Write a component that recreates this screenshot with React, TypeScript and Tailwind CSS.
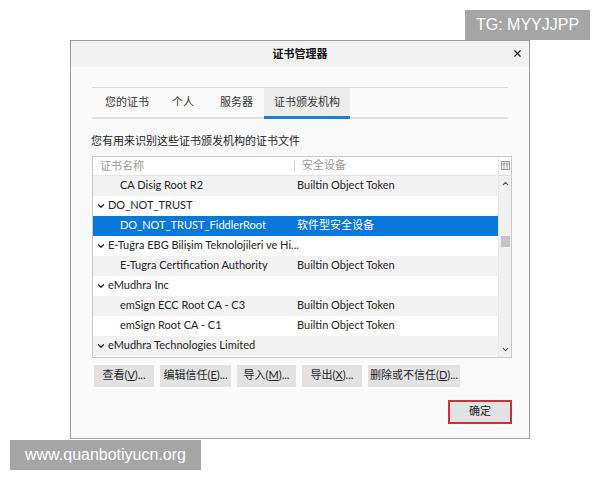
import { ChevronDown, ChevronUp, X } from "lucide-react"

const font = { fontFamily: 'Lato, "Noto Sans CJK SC", sans-serif' }

type Row = { name: string; device?: string; group?: boolean; selected?: boolean }

const rows: Row[] = [
  { name: "CA Disig Root R2", device: "Builtin Object Token" },
  { name: "DO_NOT_TRUST", group: true },
  { name: "DO_NOT_TRUST_FiddlerRoot", device: "软件型安全设备", selected: true },
  { name: "E-Tuğra EBG Bilişim Teknolojileri ve Hi...", group: true },
  { name: "E-Tugra Certification Authority", device: "Builtin Object Token" },
  { name: "eMudhra Inc", group: true },
  { name: "emSign ECC Root CA - C3", device: "Builtin Object Token" },
  { name: "emSign Root CA - C1", device: "Builtin Object Token" },
  { name: "eMudhra Technologies Limited", group: true },
]

const buttons: [string, string, string, string][] = [
  ["查看(", "V", ")...", "w-[60px]"],
  ["编辑信任(", "E", ")...", "w-[71px]"],
  ["导入(", "M", ")...", "w-[59px]"],
  ["导出(", "X", ")...", "w-[60px]"],
  ["删除或不信任(", "D", ")...", "w-[92px]"],
]

export default function App() {
  return (
    <div className="relative w-[600px] h-[480px] bg-white overflow-hidden text-[#222]" style={font}>
      <div className="pt-[40px] pl-[70px]">
        <div className="w-[460px] h-[399px] border border-[#9a9a9a] bg-[#f9f9f9] flex flex-col">
          <div className="h-[26px] bg-[#f1f1f1] flex items-center justify-center relative">
            <span className="text-[11px] font-bold text-[#111]">证书管理器</span>
            <X className="absolute right-[6px] top-[7px] w-[11px] h-[11px] text-[#111]" strokeWidth={2.5} />
          </div>

          <div className="px-[21px] pt-[20px]">
            <div className="border-t border-[#d9d9d9] border-b-2 border-b-[#e0e0e0] flex h-[32px] text-[11px] text-[#333]">
              <div className="pl-[13px] w-[80px] flex items-center">您的证书</div>
              <div className="w-[48px] flex items-center">个人</div>
              <div className="w-[44px] flex items-center">服务器</div>
              <div className="w-[86px] flex items-center justify-center bg-[#ececec] border-b-[3px] border-[#1c7fd8] -mb-[2px]">证书颁发机构</div>
            </div>

            <div className="mt-[14px] text-[11px] text-[#222] -ml-[1px]">您有用来识别这些证书颁发机构的证书文件</div>

            <div className="mt-[6px] w-[420px] h-[202px] border border-[#c8c8c8] bg-white flex">
              <div className="flex-1 flex flex-col">
                <div className="h-[19px] flex items-center text-[11px] text-[#999] border-b border-[#e4e4e4]">
                  <div className="w-[202px] pl-[7px] border-r border-[#cfcfcf] h-[12px] leading-[12px]">证书名称</div>
                  <div className="pl-[7px]">安全设备</div>
                </div>
                {rows.map((r, i) => (
                  <div
                    key={i}
                    className={
                      "h-[20px] flex items-center text-[11px] " +
                      (r.selected ? "bg-[#0a78d8] text-white" : i % 2 === 0 ? "bg-[#f2f2f2]" : "bg-white")
                    }
                  >
                    <div className="w-[203px] shrink-0 flex items-center whitespace-nowrap">
                      {r.group ? (
                        <>
                          <ChevronDown className="ml-[3px] shrink-0 w-[10px] h-[10px]" strokeWidth={3} />
                          <span className="ml-[2px]">{r.name}</span>
                        </>
                      ) : (
                        <span className="pl-[27px]">{r.name}</span>
                      )}
                    </div>
                    <div className="pl-[1px]">{r.device}</div>
                  </div>
                ))}
              </div>
              <div className="w-[13px] bg-[#f0f0f0] border-l border-[#e6e6e6] flex flex-col items-center">
                <div className="h-[19px] w-full flex items-center justify-center border-b border-[#dcdcdc] bg-white">
                  <svg width="9" height="9" viewBox="0 0 9 9" fill="none" stroke="#999" strokeWidth="1">
                    <rect x="0.5" y="0.5" width="8" height="8" />
                    <path d="M3 0.5v8M6 0.5v8M0.5 3h8" />
                  </svg>
                </div>
                <ChevronUp className="mt-[3px] w-[9px] h-[9px] text-[#555]" strokeWidth={3} />
                <div className="mt-[48px] w-[9px] h-[11px] bg-[#c4c4c4]" />
                <div className="flex-1" />
                <ChevronDown className="mb-[3px] w-[9px] h-[9px] text-[#555]" strokeWidth={3} />
              </div>
            </div>

            <div className="mt-[7px] flex gap-[6px] ml-[2px]">
              {buttons.map((b, i) => (
                <div key={i} className={"h-[22px] bg-[#e2e2e2] flex items-center justify-center text-[11px] text-[#222] whitespace-nowrap " + b[3]}>
                  {b[0]}
                  <span className="underline">{b[1]}</span>
                  {b[2]}
                </div>
              ))}
            </div>

            <div className="mt-[13px] flex justify-end">
              <div className="w-[64px] h-[24px] -mr-[4px] border-2 border-[#c8303a] bg-[#e2e2e2] flex items-center justify-center text-[11px] text-[#222]">
                确定
              </div>
            </div>
          </div>
        </div>
      </div>

      <div className="absolute left-[465px] top-[10px] w-[125px] h-[30px] bg-[#a5a5a5] text-white text-[16px] flex items-center justify-center" style={{ fontFamily: '"Liberation Sans", sans-serif' }}>
        TG: MYYJJPP
      </div>
      <div className="absolute left-[10px] top-[440px] w-[191px] h-[30px] bg-[#a5a5a5] text-white text-[16px] flex items-center justify-center" style={{ fontFamily: '"Liberation Sans", sans-serif' }}>
        www.quanbotiyucn.org
      </div>
    </div>
  )
}
